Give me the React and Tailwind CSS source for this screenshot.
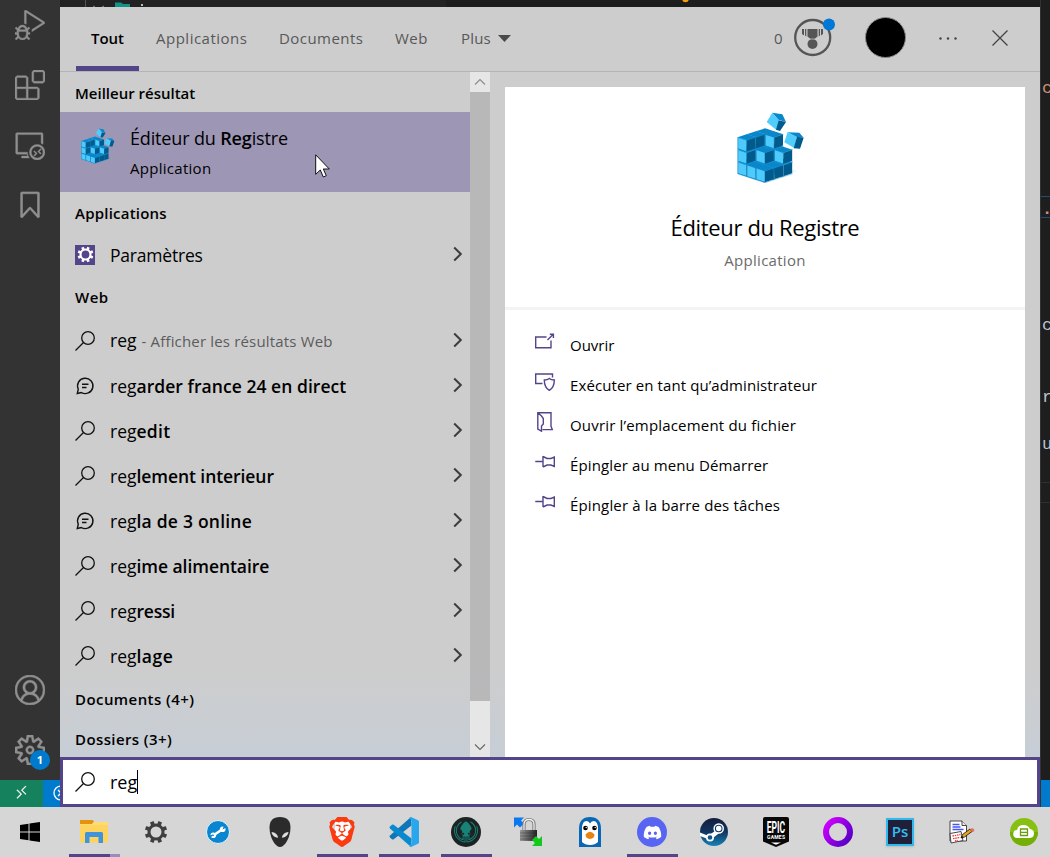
import React from "react";
import {
  VscDebugAlt,
  VscExtensions,
  VscRemoteExplorer,
  VscBookmark,
  VscAccount,
  VscSettingsGear,
  VscRemote,
} from "react-icons/vsc";
import { SiBrave, SiGitkraken } from "react-icons/si";
import { FaDiscord } from "react-icons/fa";

/* ---------- registry cube icon ---------- */
const BLOCKS = [];
for (let k = 0; k < 3; k++) {
  for (let s = 4; s >= 0; s--) {
    for (let i = 0; i < 3; i++) {
      const j = s - i;
      if (j < 0 || j > 2) continue;
      const missingMid = k >= 1 && (s === 0 || s === 1);
      const missingTop = k === 2 && ((i === 2 && j === 0) || (i === 1 && j === 1));
      if (!missingMid && !missingTop) BLOCKS.push([195 + 27.5 * (i - j), 513 - 9 * s - 37 * k]);
    }
  }
}

function RegistryIcon({ className }) {
  return (
    <svg viewBox="105 330 210 225" className={className}>
      <path d="M250 526 L292 514 L276 508 Z" fill="#000" opacity=".06" />
      {BLOCKS.map(([x, y], n) => (
        <g key={n}>
          <path d={`M${x} ${y}l-27.5 -9 27.5 -9 27.5 9z`} fill="#0a86cb" />
          <path d={`M${x} ${y}l-27.5 -9v35l27.5 9z`} fill="#1283c0" />
          <path d={`M${x - 1} ${y}l-24.5 -8v32.500l24.500 8z`} fill="#4ccbfc" />
          <path d={`M${x} ${y}l26.500 -9v33.500l-26.500 9z`} fill="#005a8c" />
          <path d={`M${x - 27.5} ${y - 9}l27.500 9 27.500 -9M${x - 27.5} ${y + 26}l27.500 9 27.500 -9`} fill="none" stroke="#1593d3" strokeWidth="1.500" />
        </g>
      ))}
      <path d="M217 338L247 343 258 366 235 359z" fill="#0a86cb" />
      <path d="M217 338L237 361 230 391 200 366z" fill="#50cdfd" />
      <path d="M236 361L258 366 240 393 228 389z" fill="#005a8c" />
      <path d="M263 397L298 398 311 413 289 411z" fill="#0a86cb" />
      <path d="M263 396L291 411 283 444 253 427z" fill="#50cdfd" />
      <path d="M291 410L311 413 300 446 281 445z" fill="#005a8c" />
    </svg>
  );
}

/* ---------- small glyphs ---------- */
const Magnifier = () => (
  <svg viewBox="0 0 20 20" className="size-5" fill="none" stroke="#111" strokeWidth="1.3">
    <circle cx="13" cy="7" r="6.300" />
    <path d="M8.500 11.500L.5 19.500" />
  </svg>
);
const Bubble = () => (
  <svg viewBox="0 0 20 20" className="size-5" fill="none" stroke="#111" strokeWidth="1.400">
    <path d="M2.300 17.500l1-4.300a7.700 7.700 0 1 1 3 3.300zM7 8.300h6.500M7 11.500h4.500" />
  </svg>
);
const Chevron = () => (
  <svg viewBox="0 0 10 16" className="mr-px mb-px h-4 w-[10px]" fill="none" stroke="#3c3c3c" strokeWidth="2">
    <path d="M1.200 1.500L7.800 8 1.200 14.500" />
  </svg>
);
function Gear({ className, color, inner = 3.7, width = 1.8 }) {
  return (
    <svg viewBox="0 0 24 24" className={className} fill="none" stroke={color}>
      <circle cx="12" cy="12" r="7" strokeWidth={width} />
      {[0, 45, 90, 135, 180, 225, 270, 315].map((a) => (
        <path key={a} d="M12 .8V5.500" strokeWidth={inner} transform={`rotate(${a + 22.5} 12 12)`} />
      ))}
    </svg>
  );
}

/* ---------- results column ---------- */
const SUGGESTIONS = [
  { rest: "arder france 24 en direct", bubble: true, track: "tracking-[0.05px]" },
  { rest: "edit", track: "tracking-[0.3px]" },
  { rest: "lement interieur", track: "tracking-[-0.07px]" },
  { rest: "la de 3 online", bubble: true, track: "tracking-[0.22px]" },
  { rest: "ime alimentaire", track: "tracking-[-0.05px]" },
  { rest: "ressi", track: "tracking-[-0.2px]" },
  { rest: "lage", track: "tracking-[0.5px]" },
];

const Heading = ({ children, className = "h-10 pt-[3px]" }) => (
  <div className={`flex shrink-0 items-center pl-[15px] text-[15px] font-semibold ${className}`}>{children}</div>
);
const Row = ({ icon, children }) => (
  <div className="flex h-[45px] shrink-0 items-center pr-[6px] pl-[15px]">
    <div className="flex w-[35px] items-center">{icon}</div>
    <div className="flex-1 whitespace-nowrap pt-px text-[17.5px]">{children}</div>
    <Chevron />
  </div>
);

function Results() {
  return (
    <div className="flex w-[410px] flex-col overflow-hidden">
      <Heading>Meilleur résultat</Heading>
      <div className="flex h-20 shrink-0 bg-[#9d97b5] pl-5">
        <RegistryIcon className="mt-[15px] h-[38px] w-[35px]" />
        <div className="ml-[15px] flex flex-col pt-[12px]">
          <div className="text-[18px] leading-[29px] tracking-[-0.15px]">
            Éditeur du <b className="font-semibold">Reg</b>istre
          </div>
          <div className="text-[15px] leading-[31px] tracking-[0.28px]">Application</div>
        </div>
      </div>
      <Heading className="h-10 pt-[3px] tracking-[0.22px]">Applications</Heading>
      <Row
        icon={
          <div className="flex size-5 items-center justify-center bg-[#54458b]">
            <Gear className="size-[17px]" color="#fff" width={3} />
          </div>
        }
      >
        <span className="tracking-[-0.2px]">Paramètres</span>
      </Row>
      <Heading className="h-[41px] tracking-[0.5px]">Web</Heading>
      <Row icon={<Magnifier />}>
        <div className="flex items-baseline pb-[2px]">
          <span>reg</span>
          <span className="ml-[5px] text-[15px] tracking-[0.17px] text-[#5c5c5c]">- Afficher les résultats Web</span>
        </div>
      </Row>
      {SUGGESTIONS.map((s) => (
        <Row key={s.rest} icon={s.bubble ? <Bubble /> : <Magnifier />}>
          reg<b className={`font-semibold ${s.track}`}>{s.rest}</b>
        </Row>
      ))}
      <Heading className="h-10 pt-[3px] tracking-[0.43px]">Documents (4+)</Heading>
      <Heading className="h-10 pt-[3px] tracking-[0.4px]">Dossiers (3+)</Heading>
    </div>
  );
}

function Scrollbar() {
  return (
    <div className="flex w-5 flex-col bg-[#e6e6e6]">
      <div className="flex h-5 items-center justify-center">
        <svg viewBox="0 0 12 8" className="h-2 w-3" fill="none" stroke="#8a8a8a" strokeWidth="1.100"><path d="M1 6.500L6 1.500l5 5" /></svg>
      </div>
      <div className="h-[609px] bg-[#b8b8b8]" />
      <div className="flex flex-1 items-end justify-center pb-[6px]">
        <svg viewBox="0 0 12 8" className="h-2 w-3" fill="none" stroke="#666" strokeWidth="1.100"><path d="M1 1.500l5 5 5-5" /></svg>
      </div>
    </div>
  );
}

/* ---------- detail pane ---------- */
const Pin = () => (
  <svg viewBox="0 0 20 20" className="size-5" fill="none" stroke="#54458b" strokeWidth="1.400">
    <path d="M.3 9.500h7.500M8 4v11M8 4.500l4 2h4l3.300-1.500v9.500l-3.300-1.500h-4l-4 2" />
  </svg>
);
const ACTIONS = [
  {
    label: "Ouvrir",
    track: "",
    icon: (
      <svg viewBox="0 0 20 20" className="size-5" fill="none" stroke="#54458b" strokeWidth="1.400">
        <path d="M11.500 5H.7v10.800H16V8.500M12.500 8l6-6M14.800 2.300h3.600V6" />
      </svg>
    ),
  },
  {
    label: "Exécuter en tant qu’administrateur",
    track: "tracking-[0.1px]",
    icon: (
      <svg viewBox="0 0 20 20" className="size-5" fill="none" stroke="#54458b" strokeWidth="1.400">
        <path d="M7.500 11.500H.7V2h16.800v3.500M14.300 6.500c1.500 1.300 3.200 1.500 5 1.500 0 4.500-.7 8-5 10.300-4.300-2.300-5-5.800-5-10.300 1.800 0 3.500-.2 5-1.500z" />
      </svg>
    ),
  },
  {
    label: "Ouvrir l’emplacement du fichier",
    track: "tracking-[0.18px]",
    icon: (
      <svg viewBox="0 0 20 20" className="size-5" fill="none" stroke="#54458b" strokeWidth="1.400">
        <path d="M2.800.8H16v13.500l1.300 3.300H7.500M2.800.8V17l3.700 2.200V14l1.800-2V6.500L6.500 4z" />
      </svg>
    ),
  },
  { label: "Épingler au menu Démarrer", track: "tracking-[0.12px]", icon: <Pin /> },
  { label: "Épingler à la barre des tâches", track: "tracking-[0.15px]", icon: <Pin /> },
];

function Details() {
  return (
    <div className="mt-[15px] ml-[15px] flex w-[520px] flex-col bg-white">
      <div className="flex h-[223px] flex-col items-center border-b-[3px] border-[#f4f4f4]">
        <RegistryIcon className="mt-[23px] mr-[-9px] h-[75px] w-[70px]" />
        <div className="mt-[27px] text-[22px] leading-[30px] tracking-[-0.35px]">Éditeur du Registre</div>
        <div className="mt-[8px] text-[15px] leading-[20px] tracking-[0.28px] text-[#6b6b6b]">Application</div>
      </div>
      <div className="flex flex-col pt-[15px]">
        {ACTIONS.map((a) => (
          <div key={a.label} className="flex h-10 items-center pl-[30px]">
            <div className="w-[35px] pb-[6px]">{a.icon}</div>
            <div className={`text-[15px] ${a.track}`}>{a.label}</div>
          </div>
        ))}
      </div>
    </div>
  );
}

/* ---------- header ---------- */
function Header() {
  return (
    <div className="flex h-[65px] shrink-0 border-b border-[#b4b4b4] pl-4 text-[15px] text-[#585858]">
      <div className="flex w-[63px] flex-col items-center border-b-[5px] border-[#54458b] pt-[20px] font-semibold text-black">Tout</div>
      <div className="ml-[17px] w-[123px] pt-[20px] tracking-[0.5px]">Applications</div>
      <div className="w-[116px] pt-[20px] tracking-[0.45px]">Documents</div>
      <div className="w-[66px] pt-[20px] tracking-[0.5px]">Web</div>
      <div className="w-[37px] pt-[20px] tracking-[0.2px]">Plus</div>
      <svg viewBox="0 0 13 7" className="mt-[28px] h-[7px] w-[13px]"><path d="M0 0h13L6.500 7z" fill="#4a4a4a" /></svg>
      <div className="ml-[263px] w-[19px] pt-[20px]">0</div>
      <svg viewBox="0 0 42 42" className="mt-[10px] size-[42px]">
        <circle cx="19.700" cy="20.500" r="17.500" fill="none" stroke="#555" strokeWidth="2.300" />
        <path d="M14.500 12h10v7.500l-3 2.500h-4l-3-2.500zM9 12h2v6.500l-2-1.500zM12 12h1.300v7.500l-1.300-1zM28 12h2v5l-2 1.500zM25.700 12h1.300v6.500l-1.300 1z" fill="#555" />
        <circle cx="19.500" cy="27" r="5" fill="#555" />
        <path d="M16.500 22h6" stroke="#cdcdcd" strokeWidth=".7" />
        <circle cx="36" cy="7.500" r="6" fill="#0078d7" />
      </svg>
      <div className="mt-[10px] ml-[30px] size-[41px] rounded-full border border-[#8b8b8b] bg-black" />
      <svg viewBox="0 0 18 3" className="mt-[30px] ml-[33px] h-[3px] w-[18px]" fill="#444">
        <circle cx="1.500" cy="1.500" r="1.200" /><circle cx="9" cy="1.500" r="1.200" /><circle cx="16.500" cy="1.500" r="1.200" />
      </svg>
      <svg viewBox="0 0 16 16" className="mt-[23px] ml-[35px] size-4" stroke="#444" strokeWidth="1.300"><path d="M.5.5l15 15M15.500.5l-15 15" /></svg>
    </div>
  );
}

/* ---------- editor window parts left visible ---------- */
function ActivityBar() {
  return (
    <div className="flex w-[60px] flex-col">
      <div className="flex h-[780px] flex-col items-center bg-[#333333] pt-[10px] text-[30px] text-[#909090] [&_svg]:stroke-[#909090] [&_svg]:stroke-[0.3px]">
        <VscDebugAlt />
        <VscExtensions className="mt-[30px]" />
        <VscRemoteExplorer className="mt-[30px]" />
        <VscBookmark className="mt-[30px]" />
        <VscAccount className="mt-[455px]" />
        <div className="relative mt-[30px]">
          <VscSettingsGear />
          <div className="absolute top-[15px] left-[15px] flex size-5 items-center justify-center rounded-full bg-[#007acc] text-[11px] font-bold text-white">1</div>
        </div>
      </div>
      <div className="flex h-[27px] overflow-hidden text-white">
        <div className="flex w-[43px] shrink-0 items-center justify-center bg-[#16825d] pb-[3px] text-[15px] [&_svg]:stroke-white [&_svg]:stroke-[0.5px]"><VscRemote /></div>
        <div className="flex w-[17px] shrink-0 items-center overflow-hidden bg-[#007acc] pb-px pl-[10px]">
          <svg viewBox="0 0 16 16" className="size-4 shrink-0" fill="none" stroke="#fff" strokeWidth="1.300"><circle cx="8" cy="8" r="7" /><path d="M5 5l6 6M11 5l-6 6" /></svg>
        </div>
      </div>
    </div>
  );
}
function EditorTop() {
  return (
    <div className="flex h-[7px] shrink-0 overflow-hidden bg-[#1d1d1d]">
      <div className="flex w-[386px] bg-[#222222] pl-[25px]">
        <div className="w-px bg-[#555]" />
        <svg viewBox="0 0 60 7" className="ml-[6px] h-[7px] w-[60px]">
          <path d="M23 2.500h6l2 1.500h7v3H23z" fill="#0f9488" />
          <path d="M1 6l2 1M12 6l-2 1" stroke="#888" />
          <rect x="49" y="4" width="2" height="2" fill="#bbb" />
        </svg>
      </div>
      <svg viewBox="0 0 8 7" className="ml-[235px] h-[7px] w-2"><circle cx="4.500" cy="-1" r="3.300" fill="#f59e0b" /></svg>
    </div>
  );
}
const CODE = [
  { c: "c", h: "h-[118px] pt-[77px]", col: "text-[#ce9178]" },
  { c: ".", h: "h-[100px] pt-[80px] font-bold", col: "text-[#ce9178]" },
  { c: "c", h: "h-[116px] pt-[96px]", col: "text-[#b8c4cc]" },
  { c: "r", h: "h-[60px] pt-[52px]", col: "text-[#b8c4cc]" },
  { c: "u", h: "h-[88px] pt-[39px]", col: "text-[#b8c4cc]" },
];
function EditorRight() {
  return (
    <div className="flex w-[10px] flex-col overflow-hidden border-l border-[#333] bg-[#1e1e1e]">
      {CODE.map((l, n) => (
        <div key={n} className={`shrink-0 pl-px font-["Liberation_Mono",monospace] text-[17px] leading-[24px] ${l.h} ${l.col} ${n === 1 ? "bg-[linear-gradient(#1f4b7d,#1f4b7d),linear-gradient(#1f4b7d,#1f4b7d)] bg-[length:100%_1px] bg-[position:0_78px,0_99px] bg-no-repeat" : ""}`}>{l.c}</div>
      ))}
      <div className="h-[21px] shrink-0 border-y border-[#303030]" />
      <div className="flex-1" />
      <div className="h-[27px] bg-[#007acc]" />
    </div>
  );
}

/* ---------- taskbar ---------- */
const TASKS = [
  {
    key: "explorer",
    open: "split",
    icon: (
      <svg viewBox="0 0 28 24" className="h-6 w-7">
        <path d="M0 2h28v20.500H0z" fill="#ffd45e" /><path d="M0 0h12.500l1.500 1.500L12 4H0z" fill="#e3940c" /><path d="M0 4h12l2-2h14v3H0z" fill="#ffdc70" />
        <path d="M5 23V13.500q0-1.500 1.500-1.500h15q1.500 0 1.500 1.500V23h-4.500v-6h-9v6z" fill="#3f94dc" />
      </svg>
    ),
  },
  { key: "settings", icon: <Gear className="size-6" color="#404040" width={3} inner={3.8} /> },
  {
    key: "support",
    icon: (
      <svg viewBox="0 0 24 24" className="size-6">
        <circle cx="12" cy="12" r="11.500" fill="#0a86d1" stroke="#e8f3fa" strokeWidth="1" />
        <path d="M8 15l8-5.500" stroke="#fff" strokeWidth="2.600" />
        <circle cx="7.300" cy="15.200" r="2.800" fill="#fff" /><circle cx="16.700" cy="9.300" r="2.800" fill="#fff" />
        <path d="M16.500 9.500l5-2.500-3-3zM7 14.500L2 16l2 3z" fill="#0a86d1" /><circle cx="7" cy="15.300" r=".9" fill="#0a86d1" />
      </svg>
    ),
  },
  {
    key: "alien",
    icon: (
      <svg viewBox="0 0 22 30" className="h-[30px] w-[22px]">
        <path d="M11 0C18 0 21.500 4 21.500 10.500c0 3-.5 6-1.500 9-1.500 4.500-5 10.500-9 10.500S3.500 24 2 19.500c-1-3-1.500-6-1.500-9C.5 4 4 0 11 0z" fill="#2b2b2b" />
        <path d="M2.500 15c3.800.4 6.200 2.500 6.700 5.800-3.600-.4-6.200-2.600-6.700-5.800zM19.500 15c-3.800.4-6.200 2.500-6.700 5.800 3.600-.4 6.200-2.600 6.700-5.800z" fill="#ddd" />
      </svg>
    ),
  },
  {
    key: "brave",
    open: "full",
    icon: (
      <div className="grid place-items-center">
        <div className="mb-[2px] h-5 w-[15px] rounded-b-[8px] bg-white [grid-area:1/1]" />
        <SiBrave className="size-[30px] text-[#fb3a12] [grid-area:1/1]" />
      </div>
    ),
  },
  {
    key: "code",
    open: "full",
    icon: (
      <svg viewBox="0 0 30 30" className="size-[30px]">
        <path d="M22 0L1 18.500q-1 1 0 2l2 1.700q.8.500 1.700 0L22.500 8.500z" fill="#0f76b8" />
        <path d="M22 30L1 11.500q-1-1 0-2l2-1.700q.8-.5 1.700 0L22.500 21.500z" fill="#0a8ace" />
        <path d="M22 0l7 3.200q1 .5 1 1.600v20.400q0 1.100-1 1.600L22 30q-1 0-1.500-.8L22.500 26V4l-2-3.200Q21 0 22 0z" fill="#2aa6ec" />
      </svg>
    ),
  },
  {
    key: "kraken",
    open: "full",
    icon: (
      <div className="flex size-[30px] items-center justify-center rounded-full bg-[#1c2324] text-[24px] text-[#178377]">
        <SiGitkraken />
      </div>
    ),
  },
  {
    key: "lock",
    icon: (
      <svg viewBox="0 0 30 30" className="size-[30px]">
        <defs><linearGradient id="lk"><stop stopColor="#999" /><stop offset="1" stopColor="#222" /></linearGradient></defs>
        <path d="M1 .5h10L8 3.500l3 3-4 4-3-3-3 3z" fill="#0a78f0" />
        <path d="M11 14V7.500q0-5 5-5t5 5V14" fill="none" stroke="#777" strokeWidth="3.200" /><path d="M11 14V7.500q0-5 5-5t5 5V14" fill="none" stroke="#eee" strokeWidth="1.300" />
        <path d="M7 13h17v11H7z" fill="url(#lk)" /><path d="M7 16h17M7 19h17M7 22h17" stroke="#222" opacity=".35" />
        <path d="M29 29H19l3-3-3-3 4-4 3 3 3-3z" fill="#12c91c" />
      </svg>
    ),
  },
  {
    key: "penguin",
    icon: (
      <svg viewBox="0 0 24 30" className="h-[30px] w-6">
        <path d="M1 30V12Q1 0 12 0t11 12v18z" fill="#0a67b4" />
        <path d="M4 25V12q0-8 4.500-8Q11 4 12 6.500 13 4 15.500 4 20 4 20 12v13q-3 3-8 3t-8-3z" fill="#fff" />
        <circle cx="7.500" cy="11" r="2.300" /><circle cx="16.500" cy="11" r="2.300" /><circle cx="8.200" cy="10.500" r=".7" fill="#fff" /><circle cx="17.200" cy="10.500" r=".7" fill="#fff" />
        <path d="M7.500 17.500q4.500-5.500 9 0 0 4-4.500 4.500-4.500-.5-4.500-4.500z" fill="#e58510" />
      </svg>
    ),
  },
  {
    key: "discord",
    open: "full",
    icon: <div className="flex size-[30px] items-center justify-center rounded-full bg-[#5865f2] text-[19px] text-white"><FaDiscord /></div>,
  },
  {
    key: "steam",
    icon: (
      <svg viewBox="0 0 28 28" className="size-7">
        <defs><linearGradient id="st" x2="0" y2="1"><stop stopColor="#171d3c" /><stop offset=".5" stopColor="#103660" /><stop offset="1" stopColor="#1682b8" /></linearGradient></defs>
        <circle cx="14" cy="14" r="14" fill="url(#st)" />
        <path d="M0 14.500l8 3.300 6-4 4.500-3.500 3 3-7 5.500-3.500 3.500L0 18z" fill="#fff" />
        <circle cx="10" cy="19.500" r="4" fill="#fff" /><circle cx="10" cy="19.500" r="2.300" fill="#14568a" />
        <circle cx="18.700" cy="10.500" r="5.300" fill="#fff" /><circle cx="18.700" cy="10.500" r="3.300" fill="#fff" stroke="#143864" strokeWidth="1.100" />
      </svg>
    ),
  },
  {
    key: "epic",
    icon: (
      <svg viewBox="0 0 26 30" className="h-[30px] w-[26px]">
        <path d="M2 0h22q2 0 2 2v22.500L13 30 0 24.500V2Q0 0 2 0z" fill="#080808" />
        <text x="3.700" y="16" fill="#fff" fontFamily="Roboto, sans-serif" fontWeight="700" fontSize="17" textLength="18.500" lengthAdjust="spacingAndGlyphs">EPIC</text>
        <text x="4" y="22" fill="#fff" fontFamily="Roboto, sans-serif" fontWeight="700" fontSize="5" textLength="18">GAMES</text>
        <path d="M8 25.500h10l-5 2.300z" fill="#fff" />
      </svg>
    ),
  },
  {
    key: "ring",
    icon: (
      <svg viewBox="0 0 30 30" className="size-[30px]">
        <defs><linearGradient id="rg" x2="1" y2=".8"><stop offset=".1" stopColor="#c800fa" /><stop offset="1" stopColor="#5a00c8" /></linearGradient></defs>
        <circle cx="15" cy="15" r="12" fill="none" stroke="url(#rg)" strokeWidth="6" />
      </svg>
    ),
  },
  {
    key: "ps",
    icon: (
      <div className="flex size-7 items-center justify-center border-2 border-[#2fb9ef] bg-[#20203a] pb-[2px] text-[15px] font-semibold text-[#35bdf0] shadow-sm">Ps</div>
    ),
  },
  {
    key: "notes",
    icon: (
      <svg viewBox="0 0 26 24" className="h-6 w-[26px]">
        <path d="M1 1h12l4.500 4.500V21H1z" fill="#fff" stroke="#333" strokeWidth=".9" /><path d="M13 1v4.500h4.500" fill="#eee" stroke="#333" strokeWidth=".9" />
        <path d="M3.500 4.500h7M3.500 7h8M3.500 9.500h11" stroke="#4a55f5" strokeWidth="1.400" />
        <path d="M1 13.500l11-2 2 9-12 2.500z" fill="#fff" stroke="#333" strokeWidth=".9" /><path d="M3.500 16l8-1.500M4 18.700l7-1.300M6 21l3-.5" stroke="#e33" strokeWidth="1.300" strokeDasharray="1.500 .8" />
        <path d="M12 18l1.500-3.500L21 9l2 2.500-7.500 5.500z" fill="#e9a21d" stroke="#222" strokeWidth=".9" /><path d="M21 9q3-1.500 4 .5t-2 2.500z" fill="#e2705e" /><path d="M12 18l1-2 1.500 1.300z" />
      </svg>
    ),
  },
  {
    key: "cloud",
    icon: (
      <svg viewBox="0 0 28 28" className="size-7">
        <circle cx="14" cy="14" r="14" fill="#87c010" /><path d="M0 14a14 14 0 0 0 28 0z" fill="#76ae08" />
        <path d="M7.500 20a4 4 0 0 1-.5-8Q8 7 13.500 7q4.500 0 6.500 4 4 .5 4 4.500t-4 4.500z" fill="#fff" />
        <path d="M10.500 11h7v6.500h-7zM10.500 14.300h7" fill="none" stroke="#6a9c10" strokeWidth="1.300" />
      </svg>
    ),
  },
];

function Taskbar() {
  return (
    <div className="flex h-[50px] shrink-0 overflow-hidden bg-[#d6d6d6]">
      <div className="flex w-[63px] shrink-0 items-center justify-center pr-[3px]">
        <svg viewBox="0 0 20 20" className="size-5"><path d="M0 3l8.500-1.200v7.700H0zM9.500 1.600L20 0v9.500H9.500zM0 10.500h8.500v7.700L0 17zM9.500 10.500H20V20L9.500 18.400z" /></svg>
      </div>
      {TASKS.map((t) => (
        <div key={t.key} className="flex w-[62px] shrink-0 flex-col items-center">
          <div className="flex h-[47px] items-center justify-center pt-[3px]">{t.icon}</div>
          {t.open && (
            <div className="flex h-[3px] w-[51px] bg-[#54458b]">
              {t.open === "split" && <div className="ml-auto w-[10px] bg-[#988dbd]" />}
            </div>
          )}
        </div>
      ))}
    </div>
  );
}

export default function App() {
  return (
    <div className='flex h-[857px] w-[1050px] flex-col overflow-hidden bg-[#1e1e1e] font-["Open_Sans","Noto_Sans",sans-serif] text-black'>
      <div className="flex h-[807px] shrink-0">
        <ActivityBar />
        <div className="relative flex w-[980px] flex-col">
          <EditorTop />
          <div className="flex h-[750px] shrink-0 flex-col bg-linear-to-b from-[#cdcdcd] from-88% to-[#c7ced6]">
            <Header />
            <div className="flex h-[685px]">
              <Results />
              <Scrollbar />
              <Details />
            </div>
          </div>
          <div className="flex h-[50px] shrink-0 items-center border-[3px] border-[#54458b] bg-white pl-3 text-[18px]">
            <Magnifier />
            <span className="ml-[15px]">reg</span>
            <div className="h-6 w-px bg-black" />
          </div>
          <svg viewBox="0 0 15 24" className="absolute top-[154px] left-[255px] h-6 w-[15px]">
            <path d="M.7.800v19.500l4.600-4.300 3 7 3-1.300-3-6.700h6z" fill="#fff" stroke="#111" strokeWidth="1" />
          </svg>
        </div>
        <EditorRight />
      </div>
      <Taskbar />
    </div>
  );
}
